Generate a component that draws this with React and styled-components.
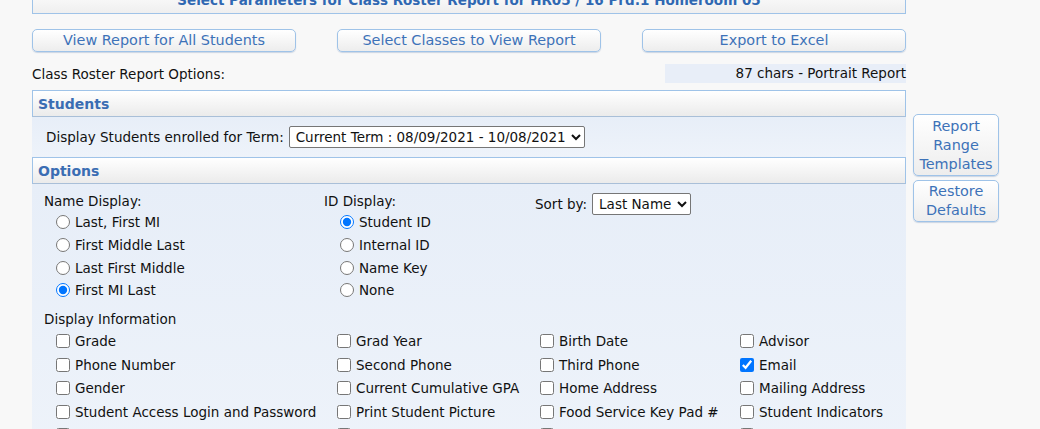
import React from 'react'
import styled, { createGlobalStyle } from 'styled-components'

const GlobalStyle = createGlobalStyle`
    body {
        margin: 0;
        background: #f8f8f8;
        font-family: "DejaVu Sans", Tahoma, sans-serif;
        font-size: 13.5px;
        color: #111;
        overflow: hidden;
    }
`;

const Page = styled.div`
    display: flex;
    align-items: flex-start;
    padding-left: 32px;
`;

const Main = styled.div`
    width: 874px;
    display: flex;
    flex-direction: column;
`;

const Side = styled.div`
    width: 86px;
    margin-left: 7px;
    margin-top: 114px;
    display: flex;
    flex-direction: column;
    gap: 4px;
`;

const TitleBar = styled.div`
    margin-top: -14px;
    height: 28px;
    box-sizing: border-box;
    border: 1px solid #9fc3e8;
    border-top: none;
    background: linear-gradient(#ffffff, #efefef);
    color: #2f68b2;
    font-weight: bold;
    font-size: 13.5px;
    display: flex;
    align-items: center;
    justify-content: center;
`;

const ButtonRow = styled.div`
    margin-top: 15px;
    display: flex;
    justify-content: space-between;
`;

const Button = styled.button`
    width: ${p => p.width || '264px'};
    height: ${p => p.height || '23px'};
    border: 1px solid #9fc3e8;
    border-radius: 5px;
    background: linear-gradient(#ffffff, #ededed);
    box-shadow: 0 1px 1px rgba(120, 150, 190, 0.35);
    color: #3d72b8;
    font-family: "DejaVu Sans", Tahoma, sans-serif;
    font-size: 14.4px;
    line-height: 19px;
    padding: 0;
    cursor: pointer;
`;

const OptionsLine = styled.div`
    margin-top: 12px;
    height: 19px;
    display: flex;
    align-items: center;
    justify-content: space-between;
`;

const CharsBox = styled.div`
    width: 241px;
    height: 19px;
    background: #e8eef8;
    text-align: right;
    line-height: 19px;
`;

const SectionHeader = styled.div`
    margin-top: ${p => p.gap || '0'};
    height: 27px;
    box-sizing: border-box;
    border: 1px solid #9fc3e8;
    border-bottom-color: #a9bfd8;
    background: linear-gradient(#ffffff, #ebebeb);
    color: #3a6db3;
    font-weight: bold;
    font-size: 14px;
    padding-left: 5px;
    display: flex;
    align-items: center;
`;

const SectionBody = styled.div`
    background: linear-gradient(#e7eef8, #eef3fa);
`;

const TermRow = styled.div`
    height: 40px;
    display: flex;
    align-items: center;
    gap: 5px;
    padding-left: 14px;
`;

const Select = styled.select`
    height: 22px;
    border: 1px solid #767676;
    border-radius: 2px;
    background: #fff;
    font-family: "DejaVu Sans", Tahoma, sans-serif;
    font-size: 13.5px;
    color: #111;
    padding: 0 2px;
`;

const TopOptions = styled.div`
    display: grid;
    grid-template-columns: 280px 211px auto;
    padding: 8px 0 0 12px;
`;

const Group = styled.div`
    display: flex;
    flex-direction: column;
`;

const GroupLabel = styled.div`
    height: 18px;
    line-height: 18px;
`;

const OptionList = styled.div`
    display: flex;
    flex-direction: column;
    margin-top: 1px;
    padding-left: ${p => p.indent || '12px'};
`;

const Option = styled.label`
    height: ${p => p.rowHeight || '22.7px'};
    display: flex;
    align-items: center;
    gap: 5px;
    white-space: nowrap;

    input {
        margin: 0;
        width: 14px;
        height: 14px;
    }
`;

const SortRow = styled.div`
    display: flex;
    align-items: center;
    gap: 5px;
    margin-top: 1px;
`;

const InfoLabel = styled.div`
    margin-top: 8px;
    padding-left: 12px;
    height: 20px;
    line-height: 18px;
`;

const InfoGrid = styled.div`
    display: grid;
    grid-template-columns: 281px 203px 200px auto;
    padding-left: 24px;
    padding-bottom: 20px;
`;

const nameOptions = ['Last, First MI', 'First Middle Last', 'Last First Middle', 'First MI Last']
const idOptions = ['Student ID', 'Internal ID', 'Name Key', 'None']
const infoOptions = [
    'Grade', 'Grad Year', 'Birth Date', 'Advisor',
    'Phone Number', 'Second Phone', 'Third Phone', 'Email',
    'Gender', 'Current Cumulative GPA', 'Home Address', 'Mailing Address',
    'Student Access Login and Password', 'Print Student Picture', 'Food Service Key Pad #', 'Student Indicators',
    'Locker', 'Homeroom', 'Counselor', 'Ethnicity',
]

function App() {
    return (
        <Page>
            <GlobalStyle />
            <Main>
                <TitleBar>Select Parameters for Class Roster Report for HR05 / 16 Prd:1 Homeroom 05</TitleBar>
                <ButtonRow>
                    <Button>View Report for All Students</Button>
                    <Button>Select Classes to View Report</Button>
                    <Button>Export to Excel</Button>
                </ButtonRow>
                <OptionsLine>
                    <span>Class Roster Report Options:</span>
                    <CharsBox>87 chars - Portrait Report</CharsBox>
                </OptionsLine>

                <SectionHeader gap="7px">Students</SectionHeader>
                <SectionBody>
                    <TermRow>
                        <span>Display Students enrolled for Term:</span>
                        <Select defaultValue="cur">
                            <option value="cur">Current Term : 08/09/2021 - 10/08/2021</option>
                        </Select>
                    </TermRow>
                </SectionBody>

                <SectionHeader>Options</SectionHeader>
                <SectionBody>
                    <TopOptions>
                        <Group>
                            <GroupLabel>Name Display:</GroupLabel>
                            <OptionList>
                                {nameOptions.map(o => (
                                    <Option key={o}>
                                        <input type="radio" name="nameDisplay" defaultChecked={o === 'First MI Last'} />
                                        {o}
                                    </Option>
                                ))}
                            </OptionList>
                        </Group>
                        <Group>
                            <GroupLabel>ID Display:</GroupLabel>
                            <OptionList indent="16px">
                                {idOptions.map(o => (
                                    <Option key={o}>
                                        <input type="radio" name="idDisplay" defaultChecked={o === 'Student ID'} />
                                        {o}
                                    </Option>
                                ))}
                            </OptionList>
                        </Group>
                        <Group>
                            <SortRow>
                                <span>Sort by:</span>
                                <Select defaultValue="last">
                                    <option value="last">Last Name</option>
                                </Select>
                            </SortRow>
                        </Group>
                    </TopOptions>
                    <InfoLabel>Display Information</InfoLabel>
                    <InfoGrid>
                        {infoOptions.map(o => (
                            <Option key={o} rowHeight="23.4px">
                                <input type="checkbox" defaultChecked={o === 'Email'} />
                                {o}
                            </Option>
                        ))}
                    </InfoGrid>
                </SectionBody>
            </Main>
            <Side>
                <Button width="86px" height="62px">Report Range Templates</Button>
                <Button width="86px" height="42px">Restore Defaults</Button>
            </Side>
        </Page>
    )
}

export default App
